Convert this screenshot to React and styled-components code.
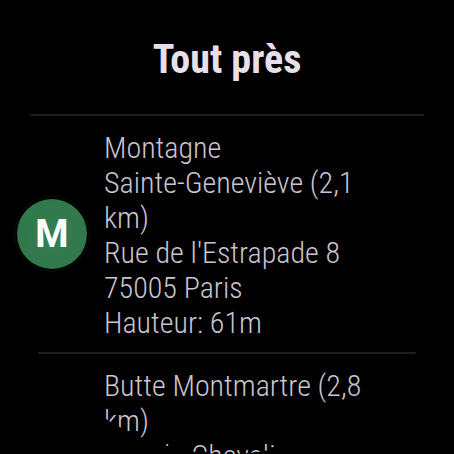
import React from "react";
import styled, { createGlobalStyle } from "styled-components";

const GlobalStyle = createGlobalStyle`
  body {
    margin: 0;
    background: #000;
    font-family: "Roboto Condensed", Roboto, sans-serif;
  }
`;

const WatchScreen = styled.main`
  width: min(100vw, 100vh);
  aspect-ratio: 1;
  margin: 0 auto;
  overflow: hidden;
  background: #000;
  clip-path: circle(50%);
`;

const Title = styled.h1`
  margin: 0;
  padding: 36px 16px 30px;
  color: #e6e0e9;
  font-size: 40px;
  font-weight: 700;
  line-height: 48px;
  text-align: center;
`;

const PlaceList = styled.ul`
  margin: 0;
  padding: 0;
  list-style: none;
`;

const PlaceRow = styled.li`
  display: grid;
  grid-template-columns: 72px 1fr;
  align-items: center;
  column-gap: 16px;
  padding: 0 80px 0 16px;
  border-top: 2px solid #1f1f1f;
`;

const Badge = styled.span`
  display: flex;
  align-items: center;
  justify-content: center;
  justify-self: center;
  width: 70px;
  height: 70px;
  border-radius: 50%;
  background: radial-gradient(circle, #357f51, #2f7449);
  box-shadow: 0 0 0 2px #000, 0 0 0 3px #06120b;
  color: #fff;
  font-family: Roboto, sans-serif;
  font-size: 38px;
  font-weight: 700;
  line-height: 44px;
`;

const Details = styled.p`
  margin: 0;
  padding: 14px 0 12px;
  color: #cac4d0;
  font-size: 30px;
  font-weight: 300;
  line-height: 35px;
  white-space: pre-line;
`;

const places = [
  {
    initial: "M",
    lines: [
      "Montagne",
      "Sainte-Geneviève (2,1",
      "km)",
      "Rue de l'Estrapade 8",
      "75005 Paris",
      "Hauteur: 61m",
    ],
  },
  {
    initial: "B",
    lines: [
      "Butte Montmartre (2,8",
      "km)",
      "Rue du Chevalier",
      "de la Barre",
      "75018 Paris",
    ],
  },
];

export default function App() {
  return (
    <>
      <GlobalStyle />
      <WatchScreen>
        <Title>Tout près</Title>
        <PlaceList>
          {places.map(({ initial, lines }) => (
            <PlaceRow key={initial}>
              <Badge aria-hidden="true">{initial}</Badge>
              <Details>{lines.join("\n")}</Details>
            </PlaceRow>
          ))}
        </PlaceList>
      </WatchScreen>
    </>
  );
}
